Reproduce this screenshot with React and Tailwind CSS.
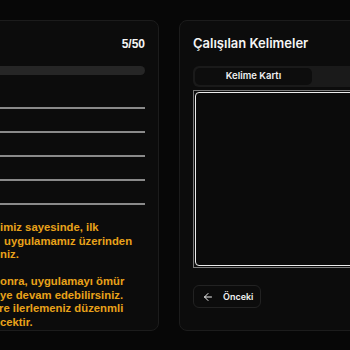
import { ArrowLeft } from 'lucide-react'

const FONT = { fontFamily: 'Inter, "Noto Sans", sans-serif' }
const ARIAL = { fontFamily: '"Liberation Sans", Arial, sans-serif' }

const paragraphOne = [
  { text: 'imiz sayesinde, ilk', cls: '' },
  { text: 'uygulamamız üzerinden', cls: 'pl-[4px]' },
  { text: 'niz.', cls: '' },
]

const paragraphTwo = [
  { text: 'onra, uygulamayı ömür', cls: '' },
  { text: 'ye devam edebilirsiniz.', cls: '' },
  { text: 're ilerlemeniz düzenmli', cls: '-ml-[1px]' },
  { text: 'cektir.', cls: '' },
]

function ProgressCard() {
  return (
    <div className="w-[339px] h-[311px] shrink-0 rounded-lg border border-[#1c1c1c] bg-[#0c0c0c] pl-[24px] pr-[13px] pt-[14px]">
      <div className="flex h-[18px] items-center justify-between">
        <span className="text-[13px] font-semibold text-[#f5f5f5]">Kelime İlerlemesi</span>
        <span className="text-[12px] font-bold text-[#f5f5f5]" style={ARIAL}>5/50</span>
      </div>
      <div className="mt-[13px] h-[9px] w-full rounded-full bg-[#262626]" />
      <div className="mt-[32px] flex flex-col gap-[22px]">
        {[0, 1, 2, 3, 4].map((i) => (
          <div key={i} className="h-[2px] w-full bg-[#8a8a8a]" />
        ))}
      </div>
      <div
        className="mt-[16px] ml-[155px] text-[11.3px] font-bold leading-[13.5px] text-[#e9a21a]"
        style={ARIAL}
      >
        {paragraphOne.map((l) => (
          <div key={l.text} className={`whitespace-nowrap ${l.cls}`}>{l.text}</div>
        ))}
        <div className="h-[13.5px]" />
        {paragraphTwo.map((l) => (
          <div key={l.text} className={`whitespace-nowrap ${l.cls}`}>{l.text}</div>
        ))}
      </div>
    </div>
  )
}

function WordsCard() {
  return (
    <div className="w-[266px] h-[311px] shrink-0 rounded-lg border border-[#1c1c1c] bg-[#0c0c0c] pl-[13px] pr-[13px] pt-[14px]">
      <div className="flex h-[18px] items-center">
        <span className="text-[13px] font-semibold text-[#f5f5f5]">Çalışılan Kelimeler</span>
      </div>
      <div className="mt-[13px] flex h-[21px] rounded-md bg-[#1a1a1a] p-[2px]">
        <button className="flex-1 rounded-[5px] bg-[#0d0d0d] text-[9.5px] font-semibold text-[#f0f0f0]">
          Kelime Kartı
        </button>
        <button className="flex-1 rounded-[5px] text-[9.5px] font-semibold text-[#a3a3a3]">
          Liste
        </button>
      </div>
      <div className="mt-[3px] h-[178px] border border-[#7a7a7a] p-[1px]">
        <div className="relative h-full rounded-[4px] border-[1.5px] border-[#ececec] bg-[#0b0b0b]">
          <div className="absolute left-[154px] top-[43px] h-[16px] w-[40px] rounded-sm bg-[#2b2f7a]" />
        </div>
      </div>
      <div className="mt-[17px] flex">
        <button className="flex h-[23px] items-center gap-[9px] rounded-md border border-[#222] bg-[#0c0c0c] pl-[8px] pr-[7px] text-[9px] font-semibold text-[#f0f0f0]">
          <ArrowLeft size={12} strokeWidth={2} />
          Önceki
        </button>
      </div>
    </div>
  )
}

export default function App() {
  return (
    <div className="h-[350px] w-[350px] overflow-hidden bg-[#070707]" style={FONT}>
      <div className="ml-[-180px] flex gap-[20px] pt-[20px]">
        <ProgressCard />
        <WordsCard />
      </div>
    </div>
  )
}
